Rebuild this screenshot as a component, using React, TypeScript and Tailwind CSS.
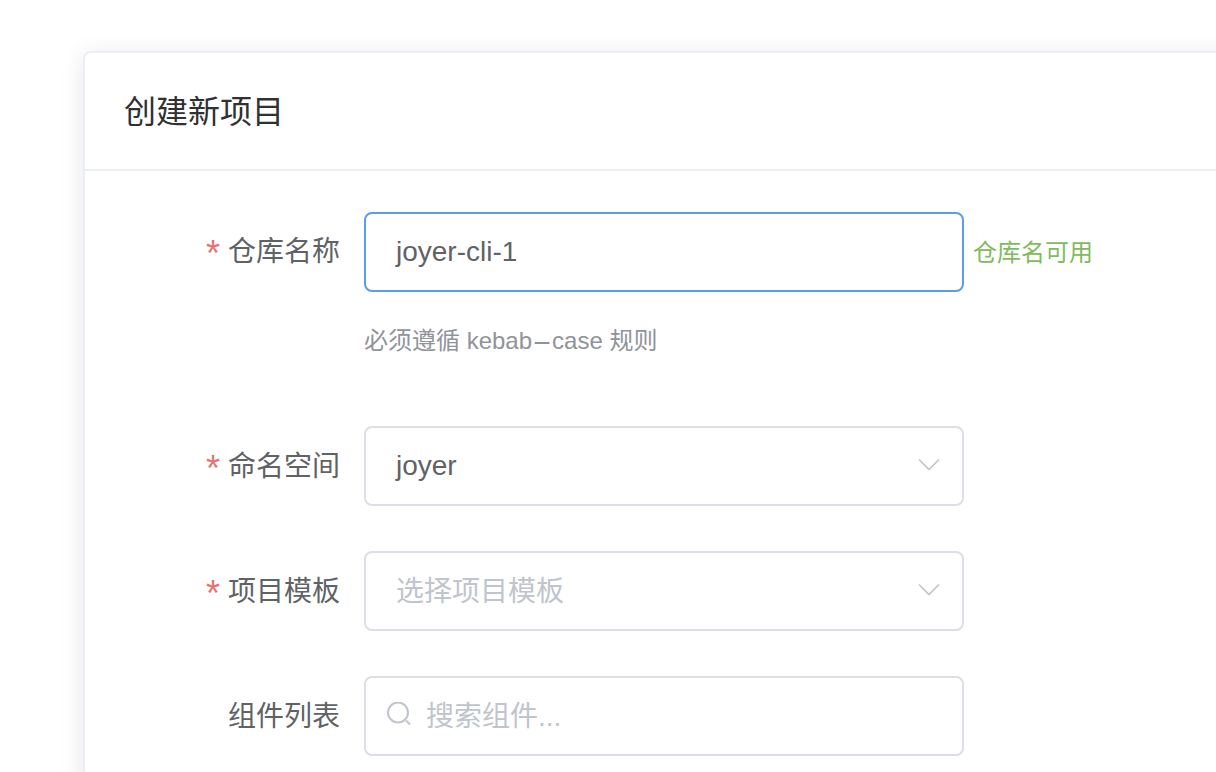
import React from "react";

function Row({ label, required, children, className = "", labelClass = "" }: { label: string; required?: boolean; children: React.ReactNode; className?: string; labelClass?: string }) {
  return (
    <div className={`flex items-start ${className}`}>
      <div className={`w-[279px] h-[80px] shrink-0 flex items-center justify-end pr-6 text-[28px] text-[#606266] ${labelClass}`}>
        {required && <span className="text-[#e57373] mr-[8px] text-[36px] leading-none translate-y-[2px]">*</span>}
        <span>{label}</span>
      </div>
      {children}
    </div>
  );
}

function Chevron() {
  return (
    <svg width="22" height="12" viewBox="0 0 22 12" fill="none" className="shrink-0 -translate-y-[1.5px]">
      <path d="M1 1 L11 11 L21 1" stroke="#c0c4cc" strokeWidth="1.6" />
    </svg>
  );
}

function Select({ value, placeholder }: { value?: string; placeholder?: string }) {
  return (
    <div className="w-[600px] h-[80px] rounded-lg border-2 border-[#dcdfe6] bg-white flex items-center justify-between pl-[30px] pr-[22px] text-[28px]">
      {value ? <span className="text-[#606266]">{value}</span> : <span className="text-[#c0c4cc] translate-y-px">{placeholder}</span>}
      <Chevron />
    </div>
  );
}

export default function App() {
  return (
    <div className="w-[1216px] h-[772px] overflow-hidden bg-white pl-[83px] pt-[51px] font-['Liberation_Sans','Noto_Sans_CJK_SC',sans-serif]">
      <div className="w-[1300px] h-[900px] rounded-t-lg border-2 border-[#ebeef5] bg-white shadow-[0_4px_24px_0_rgba(0,0,0,0.1)]">
        <div className="h-[118px] flex items-center pl-[39px] pt-0.5 border-b-2 border-[#ebeef5] text-[32px] text-[#303133]">
          创建新项目
        </div>
        <div className="pt-[41px]">
          <Row label="仓库名称" required>
            <div className="w-[600px] h-[80px] rounded-lg border-2 border-[#5c9ee6] bg-white flex items-center pl-[30px] text-[28px] text-[#606266]">
              joyer-cli-1
            </div>
            <span className="ml-[9px] h-[80px] flex items-center pt-0.5 text-[24px] text-[#7fbb5e]">仓库名可用</span>
          </Row>
          <div className="ml-[279px] mt-[30px] h-[36px] flex items-center pt-0.5 text-[24px] text-[#909399]">
            <span className="whitespace-pre">
              必须遵循 kebab<span className="inline-block scale-x-[2.5] mx-1.5">-</span>case 规则
            </span>
          </div>
          <Row label="命名空间" required className="mt-[68px]" labelClass="pt-0.5">
            <Select value="joyer" />
          </Row>
          <Row label="项目模板" required className="mt-[45px]" labelClass="pt-0.5">
            <Select placeholder="选择项目模板" />
          </Row>
          <Row label="组件列表" className="mt-[45px]" labelClass="pt-0.5">
            <div className="w-[600px] h-[80px] rounded-lg border-2 border-[#dcdfe6] bg-white flex items-center pl-[21px] text-[28px] text-[#c0c4cc]">
              <svg width="25" height="28" viewBox="0 0 25 28" fill="none" className="mr-[14px] shrink-0">
                <circle cx="11" cy="10.5" r="10" stroke="#c0c4cc" strokeWidth="2" />
                <path d="M19 18.5 L23 22.5" stroke="#c0c4cc" strokeWidth="2" />
              </svg>
              <span className="translate-y-px">搜索组件...</span>
            </div>
          </Row>
        </div>
      </div>
    </div>
  );
}
